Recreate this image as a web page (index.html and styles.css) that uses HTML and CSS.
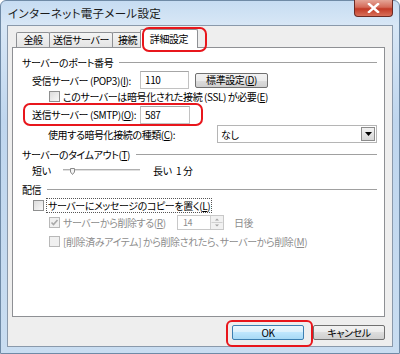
FILE: index.html
```html
<!DOCTYPE html>
<html lang="ja">
  <head>
    <meta charset="UTF-8" />
    <meta name="viewport" content="width=device-width, initial-scale=1.0" />
    <title>インターネット電子メール設定</title>
    <link rel="stylesheet" href="styles.css">
  </head>
  <body>
    <div class="window">
      <div class="titlebar">
        <span class="title">インターネット電子メール設定</span>
        <span class="close">
          <svg width="13" height="10" viewBox="0 0 13 10">
            <path d="M2 1 L11 9 M11 1 L2 9" stroke="#fff" stroke-width="2.4" stroke-linecap="square" />
          </svg>
        </span>
      </div>
      <div class="client">
        <ul class="tabs">
          <li class="tab tab-general">全般</li>
          <li class="tab tab-send">送信サーバー</li>
          <li class="tab tab-conn">接続</li>
          <li class="tab tab-detail active">詳細設定</li>
        </ul>
        <div class="panel">
          <!-- ポート番号 -->
          <div class="group-title">サーバーのポート番号<span class="rule"></span></div>
          <div class="row row-pop">
            <label class="label">受信サーバー (POP3)(<u>I</u>):</label>
            <span class="field">110</span>
            <span class="btn btn-default">標準設定(<u>D</u>)</span>
          </div>
          <div class="row row-ssl">
            <span class="check"></span>
            <span>このサーバーは暗号化された接続 (SSL) が必要(<u>E</u>)</span>
          </div>
          <div class="smtp-box">
            <label class="label label-smtp">送信サーバー (SMTP)(<u>O</u>):</label>
            <span class="field">587</span>
          </div>
          <div class="row row-enc">
            <label class="label-enc">使用する暗号化接続の種類(<u>C</u>):</label>
            <span class="select">
              <span>なし</span>
              <span class="select-arrow">
                <svg width="7" height="4" viewBox="0 0 7 4"><path d="M0 0 H7 L3.5 4 Z" fill="#000" /></svg>
              </span>
            </span>
          </div>

          <!-- タイムアウト -->
          <div class="group-title title-timeout">サーバーのタイムアウト(<u>T</u>)<span class="rule"></span></div>
          <div class="row row-slider">
            <span class="short">短い</span>
            <span class="slider">
              <span class="track"></span>
              <svg class="thumb" width="5" height="7" viewBox="0 0 5 7"><path d="M0.5 0.5 H4.5 V4 L2.5 6.5 L0.5 4 Z" fill="#f4f4f4" stroke="#8a8a8a" /></svg>
            </span>
            <span class="long">長い</span>
            <span class="minutes">1 分</span>
          </div>

          <!-- 配信 -->
          <div class="group-title title-delivery">配信<span class="rule"></span></div>
          <div class="row row-copy">
            <span class="check"></span>
            <span class="focus">サーバーにメッセージのコピーを置く(<u>L</u>)</span>
          </div>
          <div class="row row-delete disabled">
            <span class="check checked">
              <svg width="9" height="9" viewBox="0 0 9 9"><path d="M1.5 4.5 L3.5 6.5 L7.5 2" fill="none" stroke="#a8a8a8" stroke-width="1.6" /></svg>
            </span>
            <span class="delete-label">サーバーから削除する(<u>R</u>)</span>
            <span class="spin">
              <span class="spin-value">14</span>
              <span class="spin-btns">
                <svg width="12" height="13" viewBox="0 0 12 13">
                  <path d="M0.5 6.5 H11.5" stroke="#d0d0d0" />
                  <path d="M4 4.5 L6 2.5 L8 4.5 Z M4 8.5 L6 10.5 L8 8.5 Z" fill="#a0a0a0" />
                </svg>
              </span>
            </span>
            <span class="days">日後</span>
          </div>
          <div class="row row-trash disabled">
            <span class="check"></span>
            <span>[削除済みアイテム] から削除されたら、サーバーから削除(<u>M</u>)</span>
          </div>
        </div>
        <div class="buttons">
          <span class="btn btn-ok">OK</span>
          <span class="btn">キャンセル</span>
        </div>
      </div>
    </div>
  </body>
</html>
```

FILE: styles.css
```css
body,
html {
  margin: 0;
  padding: 0;
}

body {
  font-family: "Noto Sans CJK JP", "Noto Sans", sans-serif;
  font-size: 10px;
  letter-spacing: -0.4px;
  font-feature-settings: "palt";
  color: #000;
  background: #fff;
}

u {
  text-decoration: underline;
  text-underline-offset: 1px;
}

.window {
  width: 400px;
  height: 354px;
  box-sizing: border-box;
  border: 1px solid #6f8aa6;
  border-radius: 6px 6px 0 0;
  background: linear-gradient(#c6dcf2, #d8e7f6 24px, #bfd6ee 120px, #c9ddf1);
  display: flex;
  flex-direction: column;
}

.titlebar {
  height: 24px;
  display: flex;
  align-items: flex-start;
}

.title {
  margin: 4px 0 0 7px;
  font-size: 11.5px;
  letter-spacing: 0.3px;
  color: #1a1a1a;
}

.close {
  margin-left: auto;
  margin-right: 6px;
  width: 39px;
  height: 17px;
  margin-top: -1px;
  box-sizing: border-box;
  border: 1px solid #6b2a24;
  border-top: none;
  border-radius: 0 0 4px 4px;
  background: linear-gradient(#e5a597, #d46a58 45%, #c23a26 55%, #d8705a);
  display: flex;
  align-items: center;
  justify-content: center;
}

.client {
  margin: 0 6px;
  height: 322px;
  box-sizing: border-box;
  border: 1px solid #8a99ab;
  background: #eeeeee;
  padding: 3px 0 0 4px;
}

/* onglets */
.tabs {
  list-style: none;
  margin: 0 0 0 4px;
  padding: 0;
  height: 18px;
  display: flex;
  align-items: flex-end;
  position: relative;
  z-index: 1;
}

.tab {
  flex: none;
  height: 15px;
  box-sizing: border-box;
  border: 1px solid #8e9094;
  border-bottom: none;
  border-radius: 2px 2px 0 0;
  background: linear-gradient(#f4f4f4, #e4e4e4);
  margin-right: -1px;
  text-align: center;
  line-height: 14px;
  white-space: nowrap;
}

.tab-general {
  width: 34px;
}

.tab-send {
  width: 64px;
}

.tab-conn {
  width: 31px;
}

.tab.active {
  height: 19px;
  margin: 0 0 -1px -2px;
  width: 58px;
  background: #fff;
  line-height: 18px;
  position: relative;
}

.tab.active::after {
  content: "";
  position: absolute;
  left: 1px;
  top: -3px;
  width: 61px;
  height: 21px;
  border: 2px solid #e8161c;
  border-radius: 7px;
}

.panel {
  width: 373px;
  height: 270px;
  box-sizing: border-box;
  border: 1px solid #8e9094;
  background: #fff;
  padding: 6px 7px 0 9px;
}

.group-title {
  height: 16px;
  display: flex;
  align-items: center;
  white-space: nowrap;
}

.rule {
  flex: 1;
  height: 0;
  border-top: 1px solid #a0a0a0;
  margin-left: 6px;
}

.row {
  display: flex;
  align-items: center;
  white-space: nowrap;
}

.row > * {
  flex: none;
}

.label {
  width: 108px;
  padding-left: 10px;
  box-sizing: border-box;
  flex: none;
}

.row .label {
  width: 118px;
}

.field {
  flex: none;
  width: 49px;
  height: 18px;
  box-sizing: border-box;
  border: 1px solid #c2c2c2;
  border-top-color: #a6a6a6;
  padding-left: 4px;
  line-height: 16px;
  background: #fff;
}

.row-pop {
  height: 18px;
  margin-top: 1px;
}

.btn {
  height: 15px;
  box-sizing: border-box;
  border: 1px solid #707070;
  border-radius: 2px;
  background: linear-gradient(#f2f2f2, #ebebeb 50%, #dddddd 50%, #cfcfcf);
  display: inline-flex;
  align-items: center;
  justify-content: center;
  line-height: 1;
}

.btn-default {
  width: 73px;
  margin-left: 6px;
}

.row-ssl {
  height: 14px;
  padding-left: 27px;
}

.check {
  width: 11px;
  height: 11px;
  box-sizing: border-box;
  border: 1px solid #8e8f8f;
  background: linear-gradient(135deg, #dcdcdc, #f8f8f8);
  margin-right: 3px;
  display: inline-flex;
  align-items: center;
  justify-content: center;
}

.smtp-box {
  width: 180px;
  height: 23px;
  box-sizing: border-box;
  margin-left: 1px;
  border: 2px solid #e8161c;
  border-radius: 7px;
  display: flex;
  align-items: center;
  padding-left: 7px;
  white-space: nowrap;
}

.label-smtp {
  width: 108px;
  padding-left: 0;
}

.smtp-box .field {
  width: 50px;
}

.row-enc {
  height: 18px;
  margin-top: -1px;
}

.label-enc {
  width: 195px;
  padding-left: 26px;
  box-sizing: border-box;
}

.select {
  width: 160px;
  height: 18px;
  box-sizing: border-box;
  border: 1px solid #b5b5b5;
  display: flex;
  align-items: center;
  padding-left: 3px;
}

.select-arrow {
  margin-left: auto;
  margin-right: 1px;
  width: 14px;
  height: 14px;
  box-sizing: border-box;
  border: 1px solid #8c8c8c;
  background: linear-gradient(#f2f2f2, #d6d6d6);
  display: flex;
  align-items: center;
  justify-content: center;
}

.title-timeout {
  margin-top: 3px;
}

.row-slider {
  height: 16px;
  padding-left: 10px;
}

.short {
  width: 31px;
}

.slider {
  width: 77px;
  height: 16px;
  position: relative;
  display: flex;
  align-items: center;
}

.track {
  width: 100%;
  height: 1px;
  background: #b0b0b0;
  border-bottom: 1px solid #e0e0e0;
}

.thumb {
  position: absolute;
  left: 7px;
  top: 6px;
}

.long {
  margin-left: 13px;
  width: 23px;
}

.title-delivery {
  margin-top: 3px;
}

.row-copy {
  height: 14px;
  margin-top: 1px;
  padding-left: 11px;
}

.focus {
  outline: 1px dotted #555;
  outline-offset: 0;
  padding: 0 1px;
  line-height: 13px;
}

.disabled {
  color: #8d8d8d;
}

.disabled .check {
  border-color: #b8b8b8;
  background: #f0f0f0;
}

.row-delete {
  height: 15px;
  margin-top: 3px;
  padding-left: 27px;
}

.delete-label {
  width: 114px;
}

.spin {
  width: 47px;
  height: 15px;
  box-sizing: border-box;
  border: 1px solid #c8c8c8;
  display: flex;
  align-items: center;
  font-size: 9px;
}

.spin-value {
  padding-left: 5px;
}

.spin-btns {
  margin-left: auto;
  width: 12px;
  height: 13px;
  display: flex;
  border-left: 1px solid #d0d0d0;
  background: #f1f1f1;
}

.days {
  margin-left: 10px;
}

.row-trash {
  height: 14px;
  margin-top: 4px;
  padding-left: 27px;
}

.buttons {
  display: flex;
  justify-content: flex-end;
  gap: 9px;
  width: 373px;
  margin-top: 8px;
}

.buttons .btn {
  width: 72px;
}

.btn-ok {
  position: relative;
  border-color: #3c7fb1;
  background: linear-gradient(#eaf6fd, #d9f0fc 50%, #bee6fd 50%, #a7d9f5);
}

.btn-ok::after {
  content: "";
  position: absolute;
  left: -7px;
  top: -6px;
  width: 83px;
  height: 23px;
  border: 2px solid #e8161c;
  border-radius: 6px;
}
```
